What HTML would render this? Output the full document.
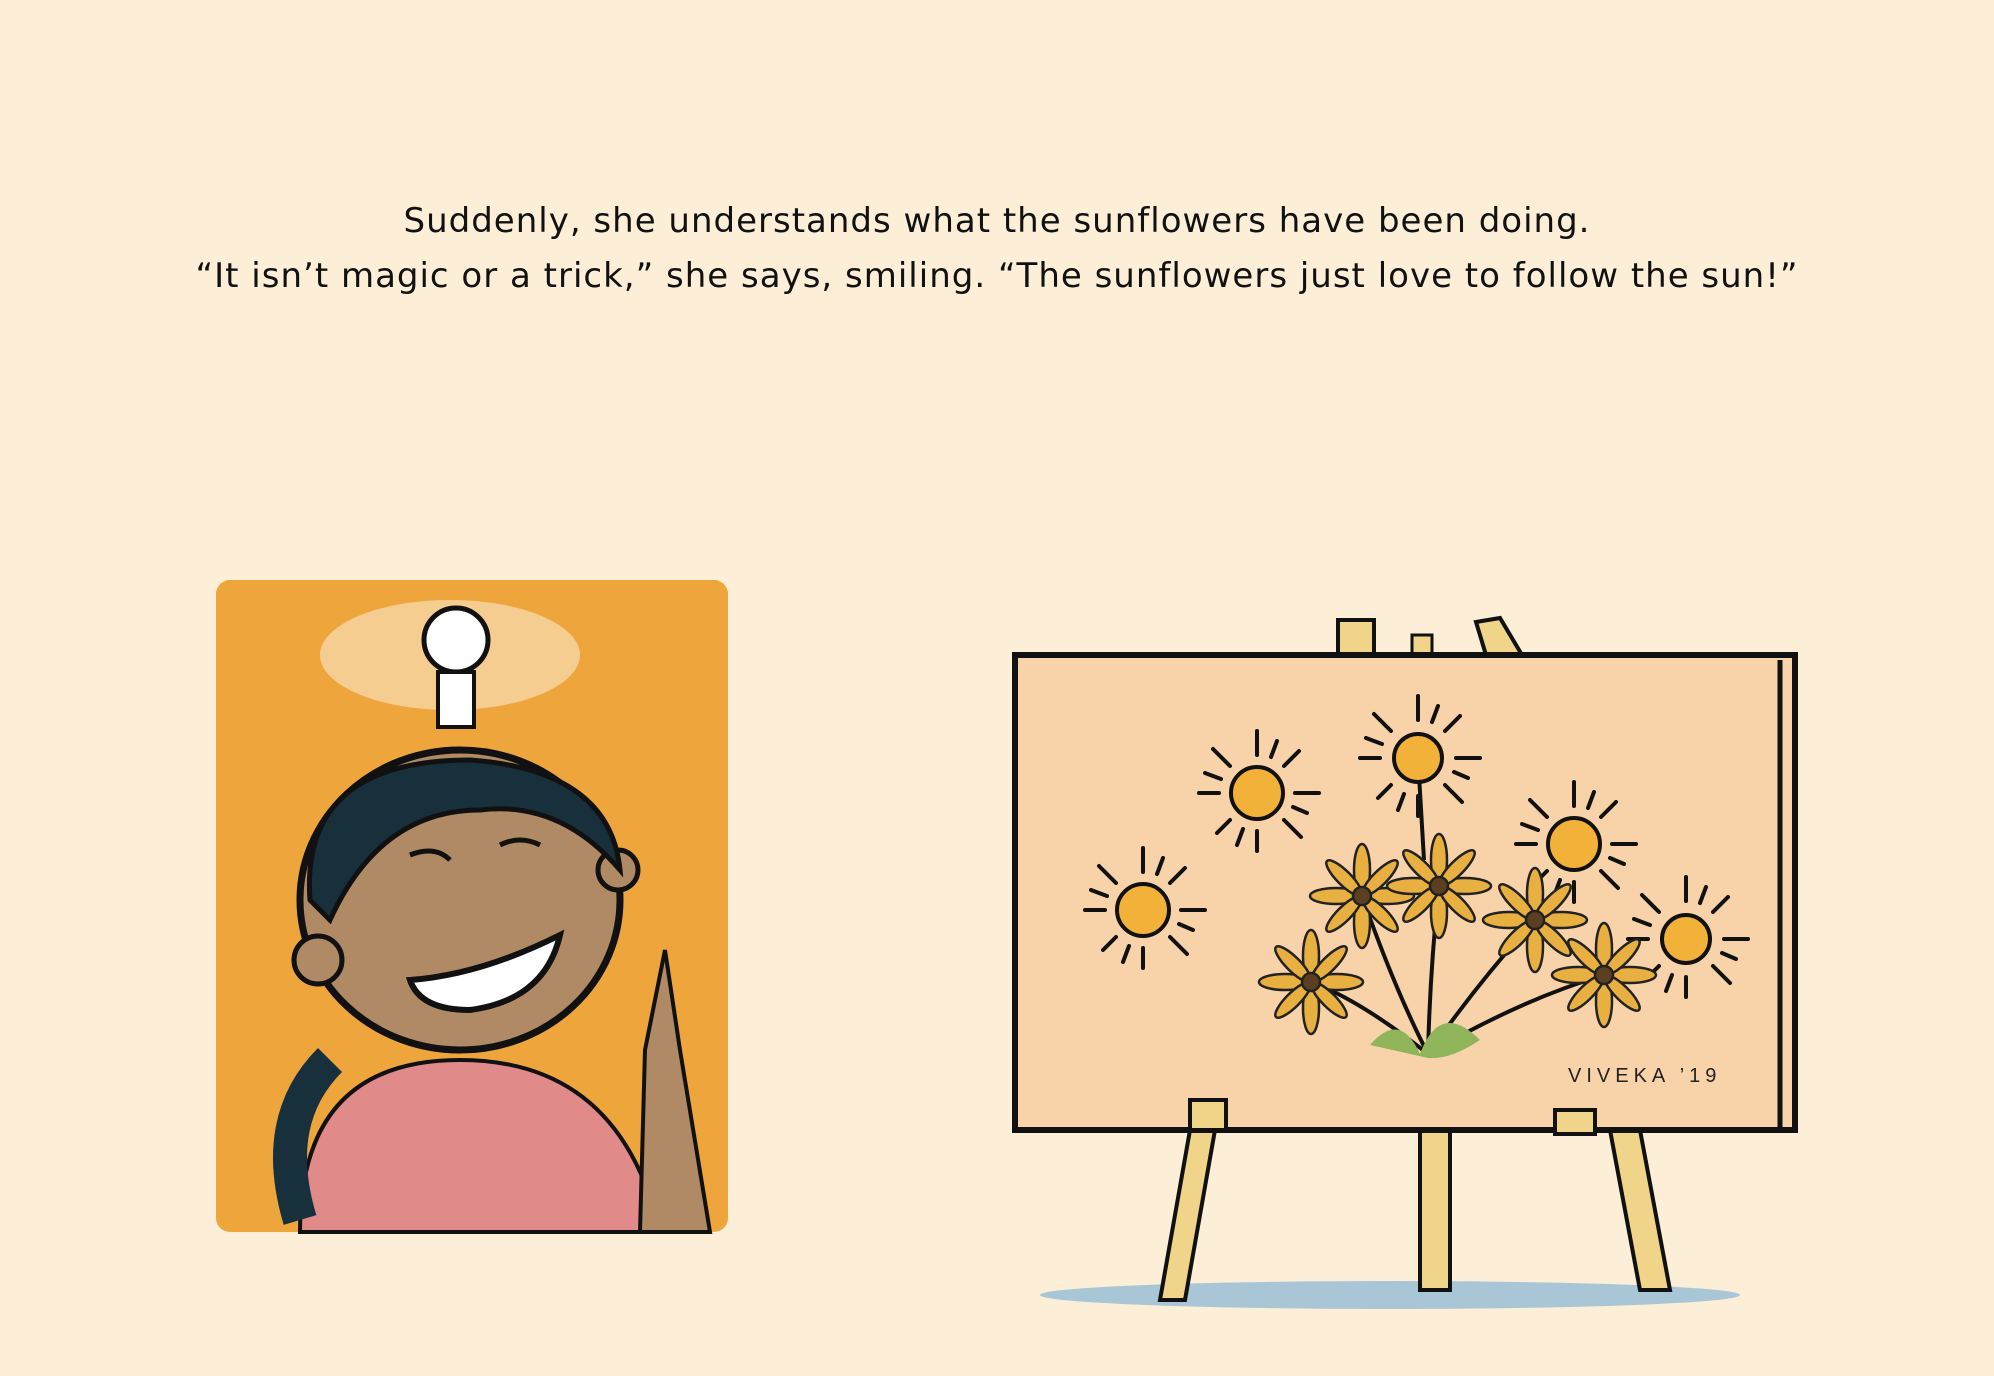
<!DOCTYPE html>
<html><head><meta charset="utf-8"><style>
html,body{margin:0;padding:0;}
body{width:1994px;height:1376px;background:#fdefd7;position:relative;overflow:hidden;font-family:"DejaVu Sans","Liberation Sans",sans-serif;}
.t{position:absolute;left:0;width:1994px;text-align:center;font-size:34px;color:#111;letter-spacing:1.0px;white-space:nowrap;}
</style></head><body>
<div class="t" style="top:201px">Suddenly, she understands what the sunflowers have been doing.</div>
<div class="t" style="top:256px">“It isn’t magic or a trick,” she says, smiling. “The sunflowers just love to follow the sun!”</div>
<svg width="1994" height="1376" style="position:absolute;left:0;top:0">
<defs>
<g id="rays" stroke="#111" stroke-width="4" stroke-linecap="round">
<line x1="0" y1="-38" x2="0" y2="-62"/><line x1="0" y1="38" x2="0" y2="58"/>
<line x1="38" y1="0" x2="62" y2="0"/><line x1="-38" y1="0" x2="-58" y2="0"/>
<line x1="27" y1="-27" x2="42" y2="-42"/><line x1="-27" y1="-27" x2="-44" y2="-44"/>
<line x1="27" y1="27" x2="44" y2="44"/><line x1="-27" y1="27" x2="-40" y2="40"/>
<line x1="14" y1="-36" x2="20" y2="-52"/><line x1="-14" y1="36" x2="-20" y2="52"/>
<line x1="36" y1="14" x2="50" y2="20"/><line x1="-36" y1="-14" x2="-52" y2="-20"/>
</g>
<g id="fl" stroke="#222" stroke-width="2.5" fill="#e8b040">
<ellipse cx="0" cy="-26" rx="8" ry="26"/><ellipse cx="0" cy="26" rx="8" ry="26"/>
<ellipse cx="26" cy="0" rx="26" ry="8"/><ellipse cx="-26" cy="0" rx="26" ry="8"/>
<ellipse cx="18" cy="-18" rx="7" ry="24" transform="rotate(45 18 -18)"/>
<ellipse cx="-18" cy="-18" rx="7" ry="24" transform="rotate(-45 -18 -18)"/>
<ellipse cx="18" cy="18" rx="7" ry="24" transform="rotate(-45 18 18)"/>
<ellipse cx="-18" cy="18" rx="7" ry="24" transform="rotate(45 -18 18)"/>
<circle r="9" fill="#5a4020"/>
</g>
</defs>
<rect x="216" y="580" width="512" height="652" rx="14" fill="#eea63c"/>
<ellipse cx="450" cy="655" rx="130" ry="55" fill="#f6d7a6" opacity="0.8"/>
<circle cx="456" cy="640" r="32" fill="#fff" stroke="#111" stroke-width="5"/>
<rect x="438" y="672" width="36" height="55" fill="#fff" stroke="#111" stroke-width="4"/>
<path d="M300 1232 Q300 1060 460 1060 Q620 1060 660 1232Z" fill="#e08a8a" stroke="#111" stroke-width="4"/>
<ellipse cx="460" cy="900" rx="160" ry="150" fill="#b08a64" stroke="#111" stroke-width="7"/>
<circle cx="318" cy="960" r="24" fill="#b08a64" stroke="#111" stroke-width="5"/>
<circle cx="618" cy="870" r="20" fill="#b08a64" stroke="#111" stroke-width="5"/>
<path d="M310 900 Q300 760 470 760 Q610 770 620 870 Q560 800 480 810 Q380 810 330 920Z" fill="#18303c" stroke="#111" stroke-width="5"/>
<path d="M330 1060 Q270 1120 300 1220" stroke="#18303c" stroke-width="34" fill="none"/>
<path d="M410 980 Q480 975 560 935 Q545 1000 470 1010 Q420 1010 410 980Z" fill="#fff" stroke="#111" stroke-width="6"/>
<path d="M410 855 Q435 845 450 860 M500 845 Q520 835 540 845" stroke="#111" stroke-width="5" fill="none"/>
<path d="M665 950 L680 1050 L710 1232 L640 1232 L645 1050Z" fill="#b08a64" stroke="#111" stroke-width="4"/>
<ellipse cx="1390" cy="1295" rx="350" ry="14" fill="#a9c6d6"/>
<path d="M1190 1130 L1160 1300 L1185 1300 L1215 1130Z M1420 1130 L1420 1290 L1450 1290 L1450 1130Z M1610 1130 L1640 1290 L1670 1290 L1640 1130Z" fill="#f0d48a" stroke="#111" stroke-width="4"/>
<rect x="1338" y="620" width="36" height="35" fill="#f0d48a" stroke="#111" stroke-width="4"/>
<rect x="1412" y="635" width="20" height="20" fill="#f0d48a" stroke="#111" stroke-width="3"/>
<path d="M1476 622 L1500 618 L1522 655 L1486 655Z" fill="#f0d48a" stroke="#111" stroke-width="4"/>
<rect x="1015" y="655" width="780" height="475" fill="#f8d3aa" stroke="#111" stroke-width="6"/>
<line x1="1780" y1="660" x2="1780" y2="1130" stroke="#111" stroke-width="5"/>
<rect x="1190" y="1100" width="36" height="30" fill="#f0d48a" stroke="#111" stroke-width="4"/>
<rect x="1555" y="1110" width="40" height="24" fill="#f0d48a" stroke="#111" stroke-width="4"/>
<path d="M1428 1054 Q1395 990 1362 896 M1428 1054 Q1430 970 1439 886 M1428 1054 Q1480 980 1535 920 M1428 1054 Q1360 1000 1311 982 M1428 1054 Q1520 1000 1604 975 M1418 758 L1424 860" stroke="#111" stroke-width="4" fill="none"/>
<path d="M1370 1045 Q1400 1010 1420 1054 Q1440 1000 1480 1040 Q1450 1060 1428 1058Z" fill="#8fb45a"/>
<g fill="#f2b23a" stroke="#111" stroke-width="4">
<circle cx="1143" cy="910" r="26"/><circle cx="1257" cy="793" r="26"/><circle cx="1418" cy="758" r="24"/><circle cx="1574" cy="844" r="26"/><circle cx="1686" cy="939" r="24"/>
</g>
<use href="#rays" x="1143" y="910"/><use href="#rays" x="1257" y="793"/><use href="#rays" x="1418" y="758"/><use href="#rays" x="1574" y="844"/><use href="#rays" x="1686" y="939"/>
<use href="#fl" x="1362" y="896"/><use href="#fl" x="1439" y="886"/><use href="#fl" x="1535" y="920"/><use href="#fl" x="1311" y="982"/><use href="#fl" x="1604" y="975"/>
<text x="1568" y="1082" font-family="Liberation Sans" font-size="20" fill="#222" letter-spacing="5">VIVEKA ’19</text>
</svg>
</body></html>
